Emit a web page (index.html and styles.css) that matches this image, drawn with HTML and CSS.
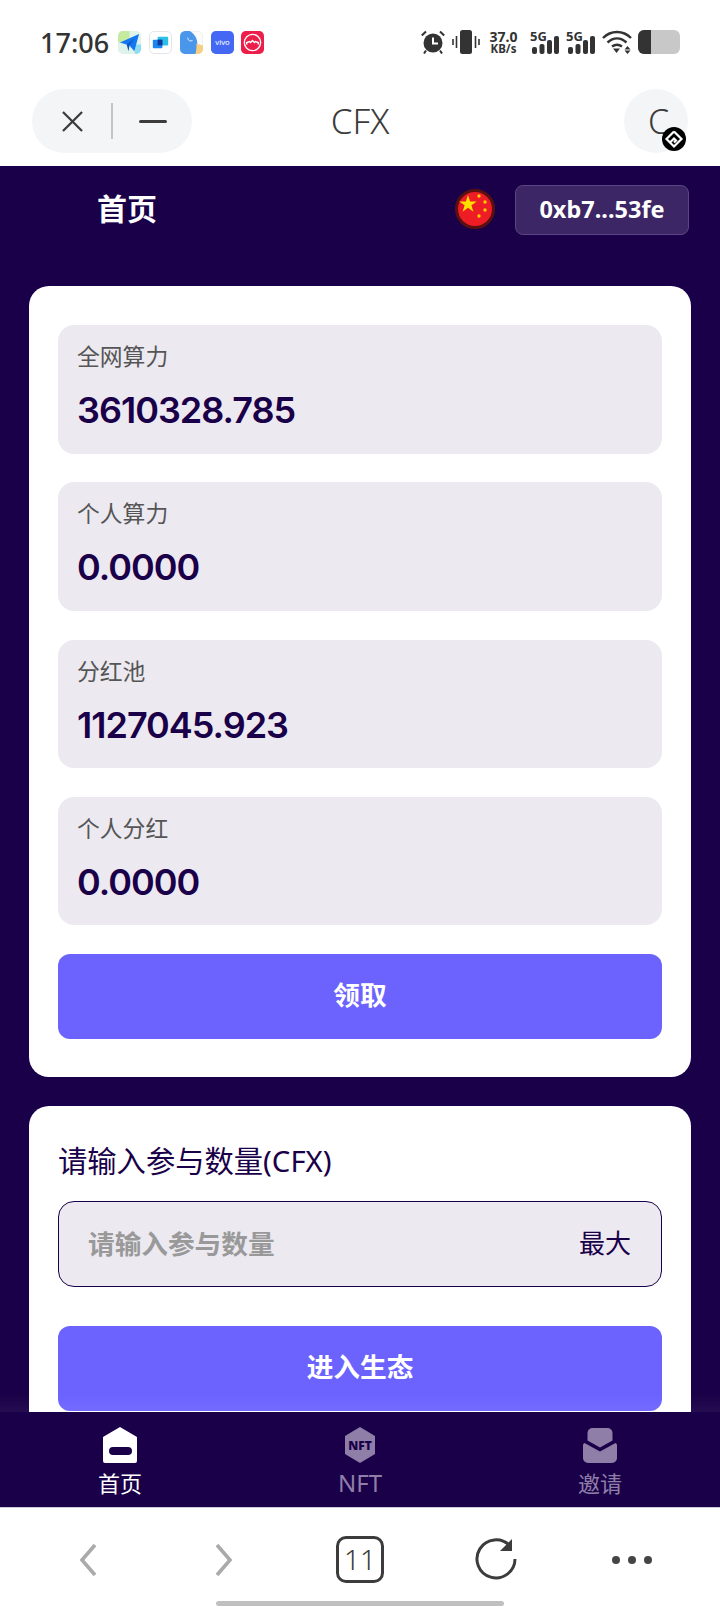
FILE: index.html
```html
<!DOCTYPE html>
<html>
	<head>
		<meta charset="UTF-8">
		<title>CFX</title>
		<link rel="stylesheet" href="styles.css">
	</head>
	<body>
		<div class="phone">
			<div class="status">
				<span class="time">17:06</span>
				<div class="apps">
					<svg viewBox="0 0 24 24"><rect width="24" height="24" rx="5" fill="#dff3ea"/><path d="M0 5a5 5 0 0 1 5-5h7v12H0z" fill="#c4eba0"/><path d="M18 24h1a5 5 0 0 0 5-5v-5h-8z" fill="#8fdcf5"/><path d="M2 12 22 3l-5 18-5-6z" fill="#1377f2"/><path d="M12 15l5-7-8 6 2 7z" fill="#0a58c8"/></svg>
					<svg viewBox="0 0 24 24"><rect x=".5" y=".5" width="23" height="23" rx="5" fill="#fff" stroke="#e2e4e8"/><rect x="9" y="6" width="11" height="9" rx="1" fill="#2cc0e8"/><rect x="4" y="9" width="10" height="9" rx="1" fill="#1a86f0"/><rect x="9" y="9" width="5" height="6" fill="#10389a"/></svg>
					<svg viewBox="0 0 24 24"><rect x=".3" y=".3" width="23.400" height="23.400" rx="5" fill="#fbfbfb" stroke="#e2e4e8" stroke-width=".6"/><path d="M5 24a5 5 0 0 1-5-5V6a6 6 0 0 1 5-6h5c6 3 9 10 8 16l-1 8z" fill="#4a96ea"/><path d="M17 13l7 2v4a5 5 0 0 1-5 5h-3c1-3 1.500-7 1-11z" fill="#f6cf80"/><path d="M8 7c0 3 3 4 5 3" fill="none" stroke="#e8f2fc"/></svg>
					<svg viewBox="0 0 24 24"><rect width="24" height="24" rx="5" fill="#4568f4"/><text x="12" y="14.500" text-anchor="middle" class="vivo">vivo</text></svg>
					<svg viewBox="0 0 24 24"><rect width="24" height="24" rx="5" fill="#ec1f4b"/><circle cx="12" cy="12" r="8.500" fill="none" stroke="#fff" stroke-width="1.400"/><path d="M6 14v-2l3-1 1 1 2-2 2 2 1-1 3 1v2" fill="none" stroke="#fff" stroke-width="1.500"/></svg>
				</div>
				<div class="status-right">
					<svg class="i-alarm" viewBox="0 0 24 24"><circle cx="12" cy="13" r="9.500" fill="#333"/><path d="M12 7.500v6h5" fill="none" stroke="#fff" stroke-width="2"/><path d="M.8 5.500 5 1.500M23.200 5.500 19 1.500M5 20.500l-2 3M19 20.500l2 3" stroke="#333" stroke-width="2"/></svg>
					<svg class="i-vib" viewBox="0 0 28 24"><rect x="8" y="0" width="12" height="24" rx="2.500" fill="#333"/><path d="M4.500 6v12M1 9v6M23.500 6v12M27 9v6" stroke="#333" stroke-width="1.600"/></svg>
					<div class="speed"><b>37.0</b><b class="unit">KB/s</b></div>
					<svg class="i-sig" viewBox="0 0 29 24"><text x="0" y="10.500" class="five-g">5G</text><rect x="2" y="17" width="5" height="7" rx="2"/><rect x="9.500" y="14" width="5" height="10" rx="2"/><rect x="17" y="10" width="5" height="14" rx="2"/><rect x="24" y="6" width="5" height="18" rx="2"/></svg>
					<svg class="i-sig" viewBox="0 0 29 24"><text x="0" y="10.500" class="five-g">5G</text><rect x="2" y="17" width="5" height="7" rx="2"/><rect x="9.500" y="14" width="5" height="10" rx="2"/><rect x="17" y="10" width="5" height="14" rx="2"/><rect x="24" y="6" width="5" height="18" rx="2"/></svg>
					<svg class="i-wifi" viewBox="0 0 30 24"><path d="M1 8c8-8 20-8 28 0M5.500 12.500c6-5.500 13-5.500 19 0M10 16.500c3.500-2.500 6.500-2.500 10 0" fill="none" stroke="#333" stroke-width="2.400"/><path d="M11 18.500h7l-3.500 4.500zM25.500 16l3 3.500h-6zM25.500 24l3-3.500h-6z" fill="#333"/></svg>
					<div class="battery"><div class="battery-level"></div></div>
				</div>
			</div>

			<div class="appbar">
				<div class="capsule">
					<svg class="i-close" viewBox="0 0 22 22"><path d="M1 1l20 20M21 1 1 21" stroke="#3c3c3c" stroke-width="2.400"/></svg>
					<span class="capsule-line"></span>
					<span class="capsule-dash"></span>
				</div>
				<div class="appbar-title">CFX</div>
				<div class="round">
					<span class="round-c">C</span>
					<svg class="badge" viewBox="0 0 24 24"><circle cx="12" cy="12" r="12" fill="#000"/><path d="M12 4.500 19.500 12 12 19.500 8 15.500 12 11.500 14 13.500 12 15.500M12 4.500 4.500 12 8 15.500" fill="none" stroke="#fff" stroke-width="2.200"/></svg>
				</div>
			</div>

			<div class="main">
				<div class="topbar">
					<span class="topbar-title">首页</span>
					<svg class="flag" viewBox="0 0 40 40"><circle cx="20" cy="20" r="18.500" fill="#ee1c25" stroke="#5a1010" stroke-width="3"/><path d="M11 6l2.100 6.400h6.700l-5.400 3.900 2 6.400-5.400-3.900-5.400 3.900 2-6.400-5.400-3.900h6.700z" transform="translate(2 0)" fill="#ffe000"/><circle cx="24" cy="7" r="1.700" fill="#fc0"/><circle cx="30" cy="13" r="1.700" fill="#fc0"/><circle cx="30" cy="21" r="1.700" fill="#fc0"/><circle cx="24" cy="27" r="1.700" fill="#fc0"/></svg>
					<div class="addr">0xb7...53fe</div>
				</div>

				<div class="card card-stats">
					<div class="stat"><div class="stat-label">全网算力</div><div class="stat-num">3610328.785</div></div>
					<div class="stat"><div class="stat-label">个人算力</div><div class="stat-num">0.0000</div></div>
					<div class="stat"><div class="stat-label">分红池</div><div class="stat-num">1127045.923</div></div>
					<div class="stat"><div class="stat-label">个人分红</div><div class="stat-num">0.0000</div></div>
					<div class="btn">领取</div>
				</div>

				<div class="card card-join">
					<div class="join-label">请输入参与数量(CFX)</div>
					<div class="input-box">
						<span class="placeholder">请输入参与数量</span>
						<span class="max">最大</span>
					</div>
					<div class="btn">进入生态</div>
				</div>
				<div class="fade"></div>
			</div>

			<div class="nav">
				<div class="nav-item on">
					<svg viewBox="0 0 34 36"><path d="M17 0 34 10v24a2 2 0 0 1-2 2H2a2 2 0 0 1-2-2V10z" fill="#fff"/><rect x="6" y="20" width="23" height="8" rx="4" fill="#1a0048"/></svg>
					<span>首页</span>
				</div>
				<div class="nav-item nav-nft">
					<svg viewBox="0 0 34 36"><path d="M17 0 32 9v18L17 36 2 27V9z" fill="#8f7fa8"/><text x="17" y="22.500" text-anchor="middle" class="nft-mark">NFT</text></svg>
					<span>NFT</span>
				</div>
				<div class="nav-item">
					<svg viewBox="0 0 34 36"><path d="M4.500 6a5 5 0 0 1 5-5h15a5 5 0 0 1 5 5v7.500L17 20.500 4.500 13.500z" fill="#8f7fa8"/><path d="M1.500 16 17 24.500 32.500 16a3 3 0 0 1 1.500 3v12a5 5 0 0 1-5 5H5a5 5 0 0 1-5-5V19a3 3 0 0 1 1.500-3z" fill="#8f7fa8"/></svg>
					<span>邀请</span>
				</div>
			</div>

			<div class="browser">
				<svg class="b-arrow" viewBox="0 0 18 34"><path d="M16 2 3 17l13 15" fill="none" stroke="#aaa" stroke-width="3.600"/></svg>
				<svg class="b-arrow b-next" viewBox="0 0 18 34"><path d="M2 2l13 15L2 32" fill="none" stroke="#aaa" stroke-width="3.600"/></svg>
				<div class="tabs">11</div>
				<svg class="b-reload" viewBox="0 0 42 42"><path d="M35 8A19 19 0 1 0 40 21" fill="none" stroke="#3c3c3c" stroke-width="3"/><path d="M37 1v12H25z" fill="#3c3c3c"/></svg>
				<div class="dots"><i></i><i></i><i></i></div>
				<div class="home-bar"></div>
			</div>
		</div>
	</body>
</html>
```

FILE: styles.css
```css
*{
	padding:0;
	margin:0;
	box-sizing:border-box;
}
body{
	width:720px;
	height:1608px;
	overflow:hidden;
	background:#fff;
	font-family:"Noto Sans","Noto Sans CJK SC",sans-serif;
}
svg{
	display:block;
	flex:none;
}
.phone{
	width:720px;
	height:1608px;
	display:flex;
	flex-direction:column;
}

/* status bar */
.status{
	height:89px;
	flex:none;
	display:flex;
	align-items:center;
	padding:0 40px 5px 40px;
	color:#333;
}
.time{
	font-size:27px;
	font-weight:500;
}
.apps{
	display:flex;
	gap:7.800px;
	margin-left:9px;
}
.apps svg{
	width:23px;
	height:23px;
}
.vivo{
	font-size:8px;
	fill:#fff;
	font-family:"Noto Sans",sans-serif;
}
.status-right{
	margin-left:auto;
	display:flex;
	align-items:center;
}
.i-alarm{
	width:24px;
	height:24px;
}
.i-vib{
	width:28px;
	height:24px;
	margin-left:7px;
}
.speed{
	width:29px;
	margin-left:9px;
	display:flex;
	flex-direction:column;
	align-items:center;
	font-size:14px;
	line-height:13px;
}
.speed .unit{
	font-size:11.500px;
	line-height:11px;
}
.i-sig{
	width:29px;
	height:24px;
	margin-left:7px;
	fill:#333;
	overflow:visible;
}
.speed + .i-sig{
	margin-left:12px;
}
.five-g{
	font-size:13px;
	font-weight:700;
	font-family:"Noto Sans",sans-serif;
}
.i-wifi{
	width:30px;
	height:24px;
	margin-left:7px;
}
.battery{
	width:42px;
	height:24px;
	margin-left:6px;
	background:#c8c8c8;
	border-radius:6px;
	overflow:hidden;
}
.battery-level{
	width:13px;
	height:24px;
	background:#333;
}

/* title bar */
.appbar{
	height:77px;
	flex:none;
	display:grid;
	grid-template-columns:160px 1fr 160px;
	align-items:start;
	padding:0 32px;
}
.capsule{
	height:64px;
	border-radius:32px;
	background:#f4f5f7;
	display:flex;
	align-items:center;
	padding-left:30px;
}
.i-close{
	width:21px;
	height:21px;
}
.capsule-line{
	width:2px;
	height:36px;
	background:#c4c4c4;
	margin-left:28px;
}
.capsule-dash{
	width:28px;
	height:3px;
	background:#3c3c3c;
	border-radius:2px;
	margin-left:26px;
}
.appbar-title{
	text-align:center;
	font-size:35px;
	font-weight:300;
	line-height:64px;
	color:#3c3c3c;
}
.round{
	justify-self:end;
	width:64px;
	height:64px;
	border-radius:50%;
	background:#f4f5f7;
	position:relative;
	padding-left:24px;
	font-size:34px;
	font-weight:300;
	line-height:64px;
	color:#3c3c3c;
}
.badge{
	position:absolute;
	left:38px;
	top:38px;
	width:24px;
	height:24px;
}

/* page */
.main{
	flex:1;
	min-height:0;
	background:#1a0048;
	overflow:hidden;
	position:relative;
	padding:0 29px;
}
.topbar{
	height:120px;
	display:flex;
	align-items:flex-start;
	padding-top:19px;
}
.topbar-title{
	margin-left:68px;
	font-size:30px;
	font-weight:700;
	line-height:48px;
	color:#fff;
}
.flag{
	width:40px;
	height:40px;
	margin-left:auto;
	margin-top:4px;
}
.addr{
	width:174px;
	height:50px;
	margin-left:20px;
	margin-right:2px;
	background:#3c2665;
	border:1px solid #5b4683;
	border-radius:8px;
	color:#fff;
	font-size:23.500px;
	font-weight:700;
	line-height:46px;
	text-align:center;
}
.card{
	background:#fff;
	border-radius:20px;
	padding:39px 29px 37px;
	width:662px;
}
.card-stats{
	height:791px;
}
.card-join{
	margin-top:29px;
	height:400px;
	padding-top:37px;
}
.stat{
	height:128.500px;
	background:#ece9f1;
	border-radius:16px;
	padding:16px 19px;
	margin-bottom:28.830px;
}
.stat-label{
	font-size:22.800px;
	line-height:32px;
	color:#555;
}
.stat-num{
	font-family:Inter,"Noto Sans",sans-serif;
	font-size:36px;
	font-weight:600;
	letter-spacing:-1px;
	line-height:50px;
	margin-top:12px;
	color:#1a0048;
}
.btn{
	height:85px;
	background:#6c63ff;
	border-radius:12px;
	color:#fff;
	font-size:26.670px;
	font-weight:700;
	line-height:81px;
	text-align:center;
}
.join-label{
	font-size:29.300px;
	line-height:34px;
	color:#1a0048;
	margin-top:1px;
}
.input-box{
	height:86px;
	margin-top:23px;
	margin-bottom:39px;
	background:#ece9f1;
	border:1px solid #1a0048;
	border-radius:16px;
	display:flex;
	align-items:center;
	justify-content:space-between;
	padding:0 30px 4px 29px;
	font-size:26px;
}
.placeholder{
	color:#999;
	font-weight:700;
	font-size:26.670px;
}
.max{
	color:#1a0048;
}
.fade{
	position:absolute;
	left:0;
	right:0;
	bottom:0;
	height:18px;
	background:linear-gradient(rgba(255,255,255,0),rgba(255,255,255,.05));
}

/* bottom tabs */
.nav{
	height:96px;
	flex:none;
	background:#1a0048;
	border-bottom:1px solid #cfc9dc;
	display:flex;
}
.nav-item{
	flex:1;
	display:flex;
	flex-direction:column;
	align-items:center;
	padding-top:15px;
	color:#8f7fa8;
	font-size:22px;
	line-height:32px;
}
.nav-item svg{
	width:34px;
	height:36px;
	margin-bottom:4px;
}
.nav-item.on{
	color:#fff;
}
.nav-nft{
	font-size:24px;
}
.nft-mark{
	font-size:12px;
	font-weight:900;
	fill:#1a0048;
	font-family:"Noto Sans",sans-serif;
}

/* browser bar */
.browser{
	height:100px;
	flex:none;
	display:flex;
	align-items:flex-start;
	position:relative;
	padding-top:28px;
	padding-left:79px;
}
.b-arrow{
	width:18px;
	height:34px;
	margin-top:7px;
}
.b-next{
	margin-left:118px;
}
.tabs{
	width:48px;
	height:47px;
	border:3px solid #3c3c3c;
	border-radius:10px;
	font-size:28px;
	font-weight:300;
	line-height:41px;
	text-align:center;
	color:#3c3c3c;
	margin-left:103px;
}
.b-reload{
	width:42px;
	height:42px;
	margin-left:91px;
	margin-top:2px;
}
.dots{
	display:flex;
	gap:8px;
	margin-left:95px;
	margin-top:20px;
}
.dots i{
	width:8px;
	height:8px;
	border-radius:50%;
	background:#444;
}
.home-bar{
	position:absolute;
	left:216px;
	bottom:2px;
	width:288px;
	height:5px;
	border-radius:3px;
	background:#c0c0c0;
}
```
